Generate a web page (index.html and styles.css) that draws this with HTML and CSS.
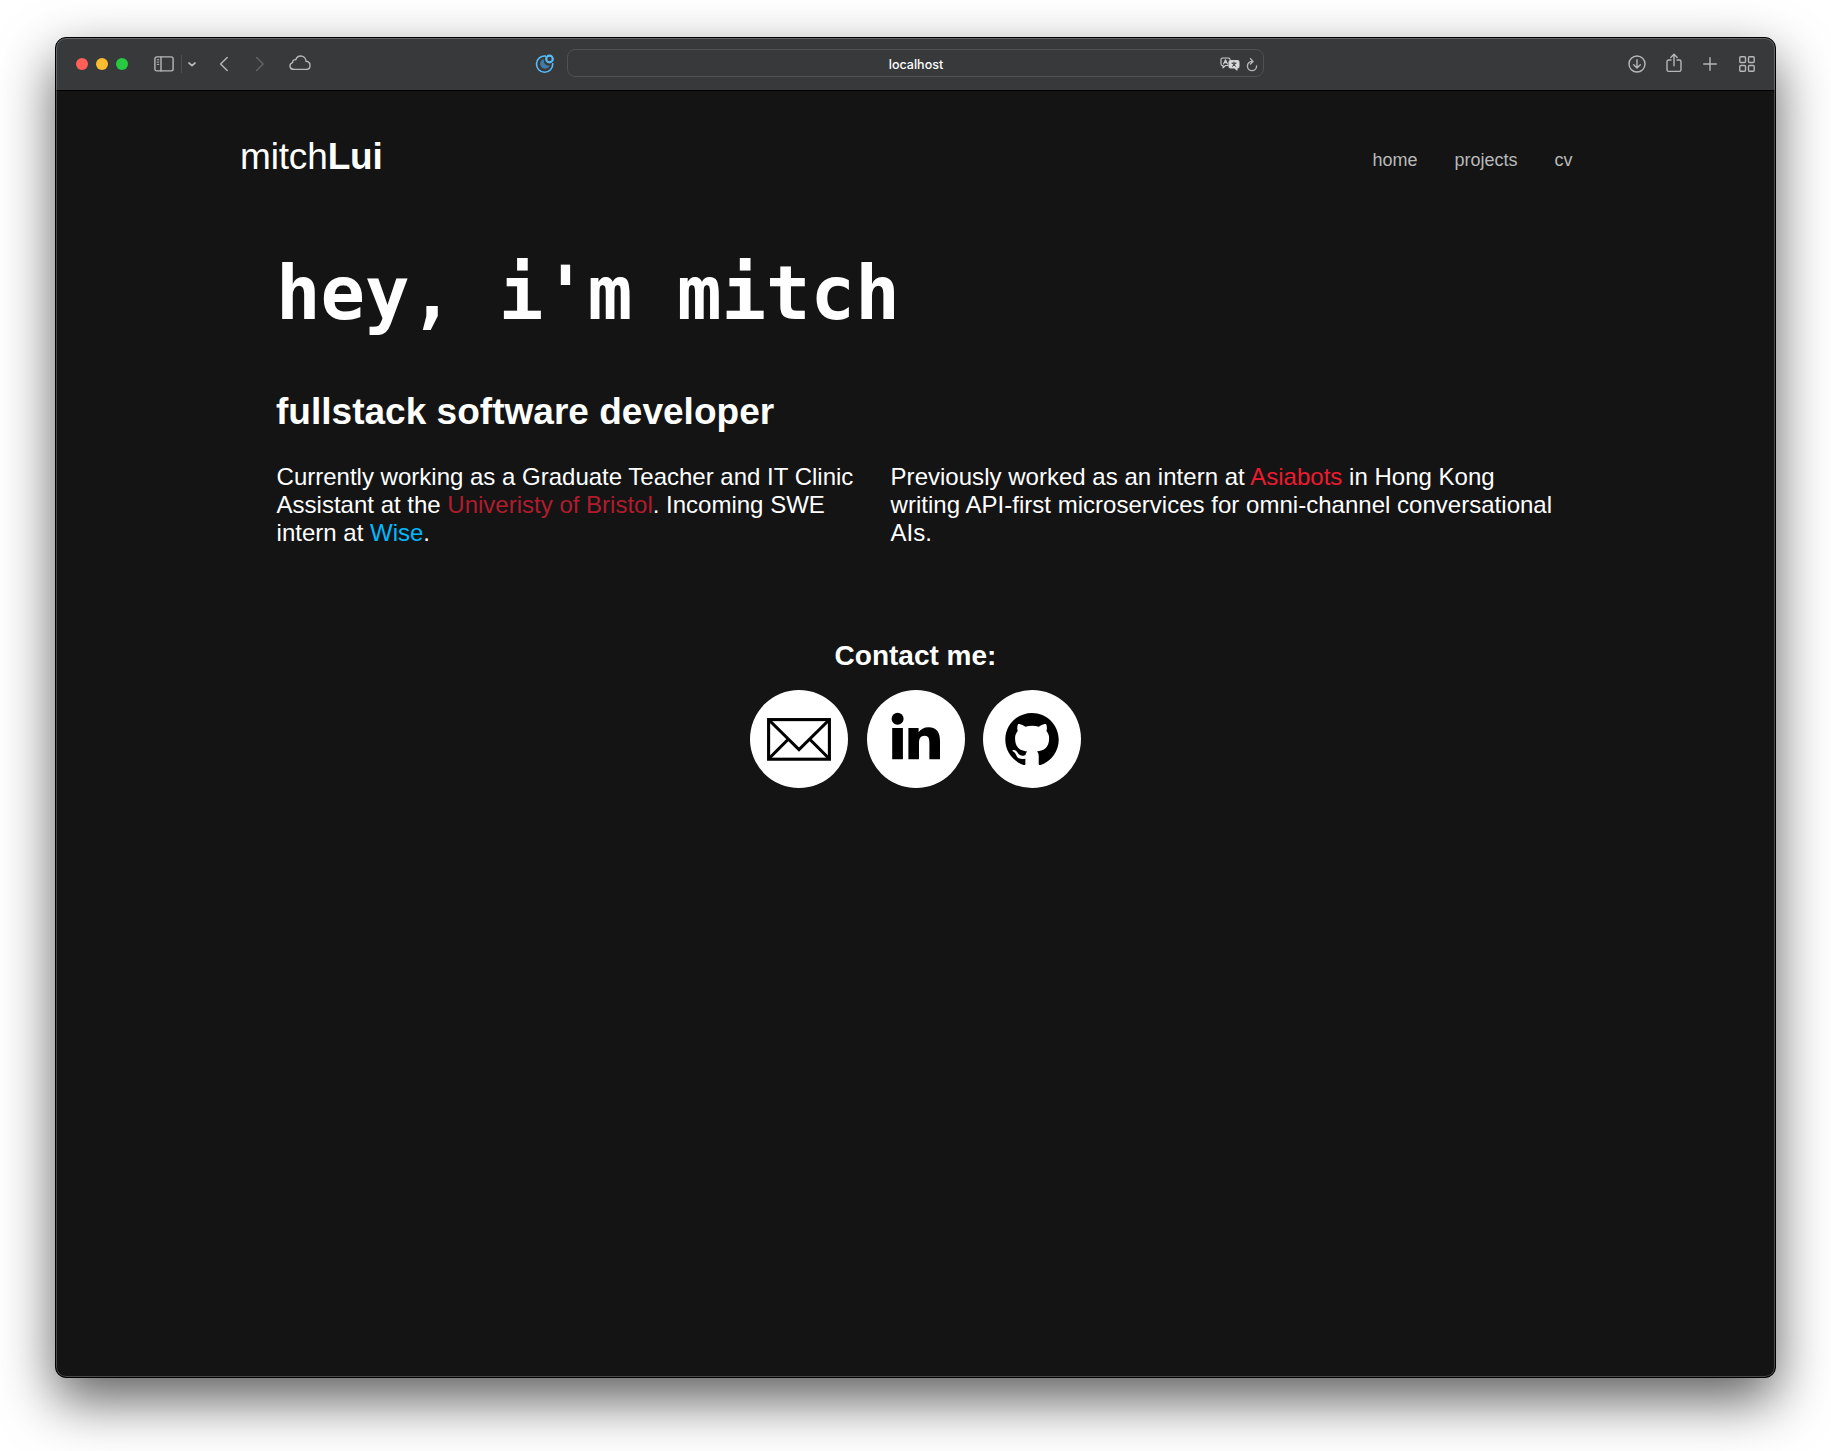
FILE: index.html
```html
<!DOCTYPE html>
<html lang="en">
<head>
<meta charset="utf-8">
<title>mitchLui</title>
<link rel="stylesheet" href="styles.css">
</head>
<body>
<div class="window">
  <header class="toolbar">
    <div class="tools tools-left">
      <span class="light red"></span><span class="light yellow"></span><span class="light green"></span>
      <svg class="sidebar" width="20" height="16" viewBox="0 0 20 16"><rect x=".9" y=".9" width="18.2" height="14" rx="1.8"/><path d="M7 1v14"/><path class="rows" d="M3.200 3.800h1.600M3.200 6.100h1.600M3.200 8.400h1.600"/></svg>
      <span class="divider"></span>
      <svg class="chevron" width="8" height="5" viewBox="0 0 8 5"><path d="M1 1l3 2.6L7 1"/></svg>
      <svg class="back" width="10" height="16" viewBox="0 0 10 16"><path d="M8.2 1.5L1.6 8l6.6 6.5"/></svg>
      <svg class="forward" width="10" height="16" viewBox="0 0 10 16"><path d="M1.6 1.5L8.2 8l-6.6 6.5"/></svg>
      <svg class="cloud" width="22" height="16" viewBox="0 0 22 16"><path d="M5.2 14.4C2.600 14.400 1 12.900 1 10.900C1 9.200 2 8 3.600 7.600C3.500 5.700 5 4.400 6.800 4.700C7.600 2.400 9.400 1 11.600 1C14.600 1 16.900 3.200 17 6.300C19.500 6.500 21 8.200 21 10.400C21 12.700 19.400 14.400 17 14.400Z"/></svg>
    </div>
    <div class="address-area">
      <svg class="shield" width="20" height="20" viewBox="0 0 20 20"><path class="moon" d="M8.200 5.200C5.200 6.400 4.200 10 6.100 12.700C8 15.300 12 15.400 14.400 12.400C14.700 11.900 14.400 11.400 13.800 11.500C10.500 11.600 8.300 9 9 6C9.100 5.400 8.700 5 8.200 5.200Z"/><path d="M10.500 2.100A8.100 8.100 0 1 0 17.700 9.700"/><circle class="badge" cx="14.500" cy="5" r="3.300"/></svg>
      <div class="address">
        <span class="host">localhost</span>
        <svg class="translate" width="20" height="14" viewBox="0 0 20 14"><path d="M8 8.500H5.500L3 10.900V8.500H2.500Q1 8.500 1 7V2.500Q1 1 2.500 1H8.500Q10 1 10 2.500"/><path d="M3.500 7L5.500 2.800L7.500 7M4.200 5.600h2.600"/><path class="bubble" d="M10.500 3.500H17.500Q19 3.500 19 5V9.500Q19 11 17.500 11H17V13L14.800 11H10.500Q9 11 9 9.500V5Q9 3.500 10.500 3.500Z"/><path class="star" d="M11.800 6.200h4.400M14 5v1.200M12.300 9.400Q15 8.400 15.500 6.200M15.800 9.400Q13.200 8.400 12.500 6.200"/></svg>
        <svg class="reload" width="12" height="14" viewBox="0 0 12 14"><path d="M6 3.400A4.600 4.600 0 1 0 10.600 8M4.500 .8L7 3.400L4.500 6"/></svg>
      </div>
    </div>
    <div class="tools tools-right">
      <svg width="18" height="18" viewBox="0 0 18 18"><circle cx="9" cy="9" r="8"/><path d="M9 4.600v8.300M5.700 9.700L9 13l3.300-3.300"/></svg>
      <svg class="share" width="16" height="20" viewBox="0 0 16 20"><path d="M5 7H2.700Q1 7 1 8.700V16.700Q1 18.400 2.700 18.400H13.300Q15 18.400 15 16.700V8.700Q15 7 13.300 7H11M8 12.800V1.500M4.800 4.500L8 1.300L11.200 4.500"/></svg>
      <svg class="plus" width="14" height="14" viewBox="0 0 14 14"><path d="M7 .7v12.600M.7 7h12.600"/></svg>
      <svg class="grid" width="16" height="16" viewBox="0 0 16 16"><rect x=".8" y=".8" width="5.700" height="5.700" rx="1"/><rect x="9.500" y=".8" width="5.700" height="5.700" rx="1"/><rect x=".8" y="9.500" width="5.700" height="5.700" rx="1"/><rect x="9.500" y="9.500" width="5.700" height="5.700" rx="1"/></svg>
    </div>
  </header>
  <main class="page">
    <div class="masthead">
      <div class="logo">mitch<b>Lui</b></div>
      <nav class="nav"><a>home</a><a>projects</a><a>cv</a></nav>
    </div>
    <section class="intro">
      <h1>hey, i'm mitch</h1>
      <h2>fullstack software developer</h2>
      <div class="columns">
        <p class="current">Currently working as a Graduate Teacher and IT Clinic<br>Assistant at the <a class="bristol">Univeristy of Bristol</a>. Incoming SWE<br>intern at <a class="wise">Wise</a>.</p>
        <p>Previously worked as an intern at <a class="asiabots">Asiabots</a> in Hong Kong<br>writing API-first microservices for omni-channel conversational<br>AIs.</p>
      </div>
    </section>
    <section class="contact">
      <h3>Contact me:</h3>
      <div class="links">
        <a class="disc"><svg width="98" height="98" viewBox="0 0 98 98"><g fill="none" stroke="#000" stroke-width="3.100"><rect x="18.600" y="29.600" width="60.800" height="39.600"/><path d="M18.500 29.500L49 59.500L79.500 29.500M18.500 69L38 49.500M79.500 69L60 49.500"/></g></svg></a>
        <a class="disc"><svg width="98" height="98" viewBox="0 0 98 98"><circle cx="30.600" cy="28.700" r="6"/><path d="M25.200 38H35.900V69.200H25.200ZM41.400 38H51.600V42.300C53.500 39.200 57 37.200 61.500 37.200C70 37.200 73 42.600 73 51V69.200H62.400V53C62.400 48.800 61.600 45.800 57.600 45.800C53.400 45.800 52 48.800 52 53V69.200H41.400Z"/></svg></a>
        <a class="disc"><svg width="98" height="98" viewBox="0 0 98 98"><path transform="translate(22.300 22.900) scale(3.340)" fill-rule="evenodd" d="M8 0C3.580 0 0 3.580 0 8c0 3.540 2.290 6.530 5.470 7.590.4.070.55-.17.55-.38 0-.19-.01-.82-.01-1.490-2.010.37-2.530-.49-2.690-.94-.09-.23-.48-.94-.82-1.130-.28-.15-.68-.52-.01-.53.63-.01 1.080.58 1.230.82.72 1.210 1.870.87 2.330.66.070-.52.28-.87.51-1.070-1.780-.2-3.640-.89-3.640-3.950 0-.87.31-1.590.82-2.150-.08-.2-.36-1.020.08-2.120 0 0 .67-.21 2.200.82.64-.18 1.320-.27 2-.27s1.360.09 2 .27c1.530-1.040 2.200-.82 2.200-.82.44 1.100.16 1.920.08 2.120.51.56.82 1.270.82 2.150 0 3.070-1.870 3.750-3.650 3.950.29.25.54.73.54 1.480 0 1.070-.01 1.930-.01 2.200 0 .21.15.46.55.38A8.010 8.010 0 0 0 16 8c0-4.420-3.580-8-8-8Z"/></svg></a>
      </div>
    </section>
  </main>
</div>
</body>
</html>
```
FILE: styles.css
```css
* { box-sizing: border-box; }
body {
  margin: 0;
  height: 1451px;
  padding: 37px 55px 73px;
  overflow: hidden;
  background: #fff;
  font-family: "Liberation Sans", Arial, sans-serif;
}
h1, h2, h3, p { margin: 0; }
.window {
  position: relative;
  height: 1341px;
  border: 1px solid #000;
  border-radius: 11px;
  overflow: hidden;
  background: #141414;
  color: #fff;
  box-shadow: 0 22px 54px rgba(0, 0, 0, .63);
}
.window::after {
  content: "";
  position: absolute;
  inset: 0;
  border: 1px solid rgba(255, 255, 255, .23);
  border-radius: 10px;
}
.toolbar {
  display: flex;
  align-items: center;
  height: 53px;
  border-bottom: 1px solid #000;
  background: #38393b;
}
.toolbar svg {
  display: block;
  flex: none;
  fill: none;
  stroke: #b6b7b8;
  stroke-width: 1.4;
  stroke-linecap: round;
  stroke-linejoin: round;
}
.tools { display: flex; align-items: center; }
.tools-left { width: 479px; padding-left: 20px; }
.light { width: 12px; height: 12px; margin-right: 8px; border-radius: 50%; }
.red { background: #ff5f57; }
.yellow { background: #febc2e; }
.green { background: #28c840; }
.sidebar { margin: -1px 0 0 18px; }
.sidebar .rows { stroke-width: 1; }
.divider { width: 1px; height: 18px; margin: 0 6px 0 7px; background: #4d4e50; }
.toolbar .chevron { stroke-width: 1.7; }
.back { margin: -1px 0 0 23px; }
.toolbar .forward { margin: -1px 0 0 26px; stroke: #626365; }
.cloud { margin: -2px 0 0 24px; }
.address-area { display: flex; align-items: center; gap: 12px; }
.toolbar .shield { margin-top: -1px; stroke: #56bdf8; stroke-width: 1.6; }
.shield .moon { fill: #417ba3; stroke: none; }
.shield .badge { stroke-width: 2.2; }
.address {
  display: grid;
  grid-template-columns: 1fr auto 1fr;
  align-items: center;
  width: 697px;
  height: 28px;
  margin-top: -2px;
  border: 1px solid #505153;
  border-radius: 8px;
}
.host {
  grid-column: 2;
  grid-row: 1;
  padding: 3px 0 0 1px;
  font: 500 12.500px/16px Inter, sans-serif;
}
.translate { grid-column: 3; grid-row: 1; margin: 2px 23px 0 auto; }
.toolbar .translate { stroke: #cfcfd0; stroke-width: 1.1; }
.translate .bubble { fill: #dededf; }
.translate .star { stroke: #38393b; stroke-width: .9; }
.reload { grid-column: 3; grid-row: 1; justify-self: end; margin: 3px 5px 0 0; }
.tools-right { margin-left: auto; gap: 21px; padding-right: 20px; }
.share { margin: -2px 1px 0 -1px; }
.plus { margin: -1px 0 0 -1px; }
.grid { margin: -1px 0 0 1px; }

.page { padding: 44px 184px 0; }
.masthead { display: flex; justify-content: space-between; height: 44px; }
.logo { font-size: 37px; line-height: 44px; letter-spacing: -.15px; }
.nav { display: flex; gap: 37px; margin-top: 15px; padding-right: 18.500px; font-size: 18px; line-height: 20px; color: #b9b9b9; }
.intro { padding: 71px 0 0 36px; }
h1 { font: bold 74px/86px "DejaVu Sans Mono", monospace; }
h2 { margin-top: 55px; font-size: 37px; line-height: 42px; letter-spacing: .02px; }
.columns {
  display: grid;
  grid-template-columns: 614px 1fr;
  margin-top: 30px;
  padding-left: .6px;
  font-size: 24px;
  line-height: 28px;
  letter-spacing: .02px;
  white-space: nowrap;
}
.current { letter-spacing: 0; }
.bristol { color: #b01c2e; }
.wise { color: #00b9ff; }
.asiabots { color: #ed1b2f; }
.contact { margin-top: 93px; text-align: center; }
h3 { font-size: 28px; line-height: 32px; }
.links { display: flex; justify-content: center; gap: 18.500px; margin-top: 18px; }
.disc { width: 98px; height: 98px; border-radius: 50%; background: #fff; }
.disc svg { display: block; }
```
